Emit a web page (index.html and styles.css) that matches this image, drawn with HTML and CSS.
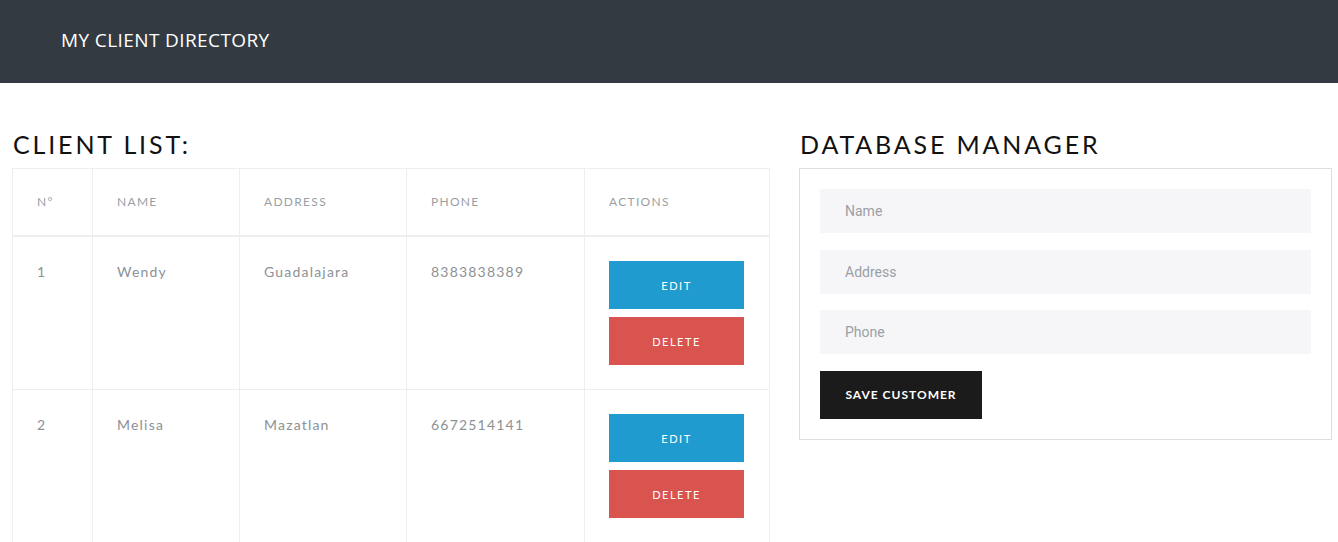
FILE: index.html
```html
<!DOCTYPE html>
<html lang="en">
<head>
<meta charset="utf-8">
<title>My Client Directory</title>
<link rel="stylesheet" href="styles.css">
</head>
<body>
<header class="topbar">
  <span class="brand">MY CLIENT DIRECTORY</span>
</header>
<main class="layout">
  <section class="list-col">
    <h2 class="section-title">CLIENT LIST:</h2>
    <table class="clients">
      <colgroup>
        <col class="c-num"><col class="c-name"><col class="c-addr"><col class="c-phone"><col class="c-act">
      </colgroup>
      <thead>
        <tr><th>N°</th><th>NAME</th><th>ADDRESS</th><th>PHONE</th><th>ACTIONS</th></tr>
      </thead>
      <tbody>
        <tr>
          <td>1</td><td>Wendy</td><td>Guadalajara</td><td>8383838389</td>
          <td><div class="actions"><button class="btn btn-edit">EDIT</button><button class="btn btn-delete">DELETE</button></div></td>
        </tr>
        <tr>
          <td>2</td><td>Melisa</td><td>Mazatlan</td><td>6672514141</td>
          <td><div class="actions"><button class="btn btn-edit">EDIT</button><button class="btn btn-delete">DELETE</button></div></td>
        </tr>
      </tbody>
    </table>
  </section>
  <section class="form-col">
    <h2 class="section-title">DATABASE MANAGER</h2>
    <form class="panel">
      <input class="field" type="text" placeholder="Name">
      <input class="field" type="text" placeholder="Address">
      <input class="field" type="text" placeholder="Phone">
      <button type="button" class="btn-save">SAVE CUSTOMER</button>
    </form>
  </section>
</main>
</body>
</html>
```

FILE: styles.css
```css
* { box-sizing: border-box; }
html, body { margin: 0; padding: 0; }
body {
  font-family: "Lato", "Noto Sans", sans-serif;
  background: #fff;
  color: #212529;
  overflow: hidden;
}
.topbar {
  height: 83px;
  background: #343a42;
  display: flex;
  align-items: center;
  padding-left: 61px;
}
.brand {
  font-family: "Open Sans", "Noto Sans", sans-serif;
  font-size: 19px;
  font-weight: 500;
  color: #fff;
  letter-spacing: 0.4px;
  position: relative;
  top: -2px;
}
.layout {
  display: grid;
  grid-template-columns: 757px 533px;
  column-gap: 30px;
  padding: 46px 0 0 12px;
}
.section-title {
  margin: 0 0 9px 1px;
  font-family: "Lato", sans-serif;
  font-weight: 400;
  font-size: 25px;
  line-height: 30px;
  letter-spacing: 2.85px;
  color: #111;
}
.clients {
  width: 757px;
  border-collapse: collapse;
  table-layout: fixed;
}
.c-num { width: 80px; }
.c-name { width: 147px; }
.c-addr { width: 167px; }
.c-phone { width: 178px; }
.c-act { width: 185px; }
.clients th, .clients td {
  border: 1px solid #eeeeee;
  text-align: left;
  vertical-align: top;
  padding: 24px 24px;
}
.clients th {
  padding-top: 23px;
  padding-bottom: 23px;
  font-size: 12px;
  font-weight: 400;
  letter-spacing: 1.3px;
  color: #9a9fa6;
  line-height: 20px;
  border-bottom: 2px solid #eeeeee;
}
.clients td {
  padding-top: 25px;
  font-size: 14px;
  color: #8c9196;
  letter-spacing: 1.2px;
  line-height: 19px;
}
.actions {
  display: flex;
  flex-direction: column;
  gap: 8px;
  width: 135px;
  margin-top: -1px;
}
.btn {
  height: 48px;
  border: 0;
  color: #fff;
  font-family: "Lato", sans-serif;
  font-size: 11px;
  letter-spacing: 1.5px;
  cursor: pointer;
}
.btn-edit { background: #209bcf; }
.btn-delete { background: #d9534f; }
.panel {
  border: 1px solid #dedede;
  padding: 20px;
  display: flex;
  flex-direction: column;
  align-items: flex-start;
  gap: 16.5px;
  width: 533px;
}
.field {
  width: 100%;
  height: 44px;
  border: 0;
  background: #f6f6f8;
  padding: 0 25px;
  font-family: "Roboto", "Noto Sans", sans-serif;
  font-size: 14px;
  color: #555;
  outline: none;
}
.field::placeholder { color: #9a9fa6; }
.btn-save {
  height: 48px;
  width: 162px;
  border: 0;
  background: #1b1b1b;
  color: #fff;
  font-family: "Lato", sans-serif;
  font-weight: 700;
  font-size: 12px;
  letter-spacing: 1px;
  cursor: pointer;
}
```
